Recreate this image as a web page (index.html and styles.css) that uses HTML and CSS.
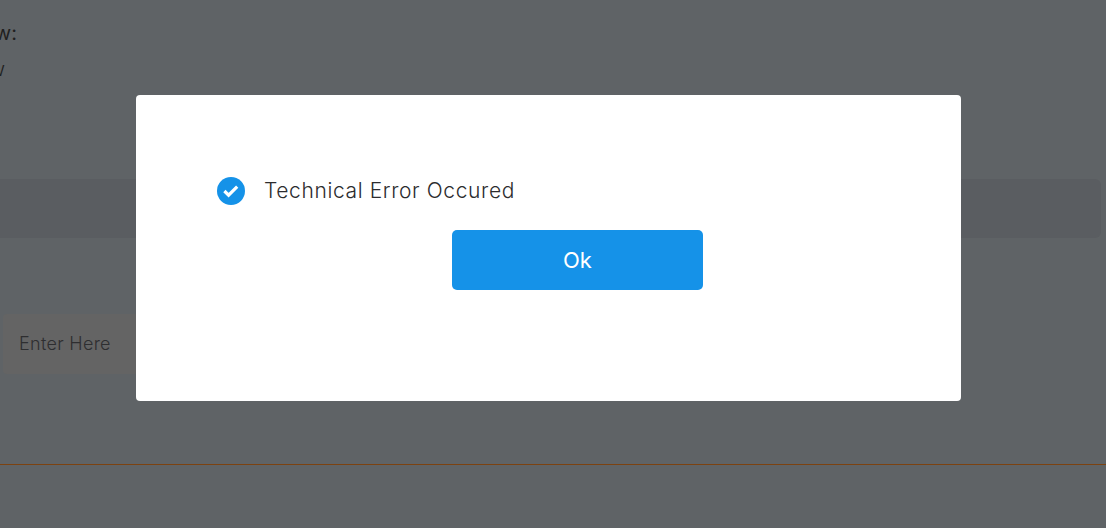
FILE: index.html
```html
<!DOCTYPE html>
<html lang="en">
<head>
<meta charset="utf-8">
<title>Technical Error</title>
<link rel="stylesheet" href="styles.css">
</head>
<body>
<main class="page">
  <div class="intro">
    <p class="heading">View:</p>
    <p class="sub">View</p>
  </div>
  <div class="bar"></div>
  <div class="field"><span class="placeholder">Enter Here</span></div>
  <hr class="rule">
</main>
<div class="dialog" role="dialog">
  <div class="message">
    <svg class="check" viewBox="0 0 28 28" width="28" height="28" aria-hidden="true">
      <circle cx="14" cy="14" r="14" fill="#1592e8"/>
      <path d="M7.4 14l4.2 4.2 8.6-8.6" fill="none" stroke="#fff" stroke-width="3.2"/>
    </svg>
    <span class="message-text">Technical Error Occured</span>
  </div>
  <button class="ok" type="button">Ok</button>
</div>
</body>
</html>
```

FILE: styles.css
```css
html, body {
  margin: 0;
  height: 100%;
  overflow: hidden;
  background: #5f6366;
}
.page {
  height: 528px;
  padding-top: 22px;
  box-sizing: border-box;
  font-family: Inter, "Liberation Sans", sans-serif;
  overflow: hidden;
}
.intro {
  width: 17px;
  height: 157px;
  overflow: hidden;
  display: flex;
  flex-direction: column;
  align-items: flex-end;
}
.heading, .sub {
  margin: 0;
  color: #1f1f20;
  white-space: nowrap;
}
.heading {
  font-size: 20px;
  line-height: 24px;
  font-weight: 400;
  position: relative;
  top: -1px;
}
.sub {
  margin-top: 11px;
  margin-right: 12px;
  font-size: 20px;
  line-height: 24px;
  font-weight: 300;
}
.bar {
  height: 59px;
  width: 1101px;
  background: #5a5d61;
  border-radius: 0 6px 6px 0;
}
.field {
  margin: 76px 0 0 3px;
  width: 400px;
  height: 60px;
  box-sizing: border-box;
  padding-left: 16px;
  display: flex;
  align-items: center;
  background: #646464;
  border-radius: 4px;
}
.placeholder {
  font-size: 18px;
  font-weight: 300;
  color: #2e2e30;
  letter-spacing: .3px;
  position: relative;
  top: -1px;
}
.rule {
  margin: 90px 0 0;
  border: 0;
  height: 1px;
  background: #7c4210;
}
.dialog {
  position: absolute;
  left: 136px;
  top: 95px;
  width: 825px;
  height: 306px;
  box-sizing: border-box;
  padding: 82px 81px 0;
  background: #fff;
  border-radius: 4px;
  font-family: Inter, "Liberation Sans", sans-serif;
}
.message {
  display: flex;
  align-items: center;
  gap: 19px;
  height: 28px;
}
.check { flex: none; }
.message-text {
  font-size: 21px;
  line-height: 26px;
  font-weight: 300;
  color: #2c2c2e;
  letter-spacing: .62px;
}
.ok {
  display: block;
  margin: 25px 0 0 235px;
  width: 251px;
  height: 60px;
  border: 0;
  border-radius: 5px;
  background: #1592e8;
  color: #fff;
  font-family: inherit;
  font-size: 22px;
  font-weight: 400;
}
```
